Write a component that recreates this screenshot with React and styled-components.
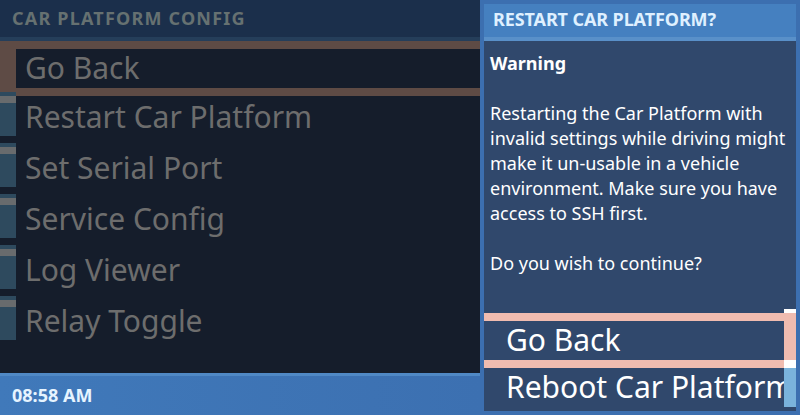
import React from "react";
import styled, { createGlobalStyle } from "styled-components";

const GlobalStyle = createGlobalStyle`
  html, body {
    margin: 0;
    padding: 0;
    background: #151d2b;
    font-family: "Noto Sans", "Open Sans", sans-serif;
  }
  * { box-sizing: border-box; }
`;

const menuItems = [
  "Go Back",
  "Restart Car Platform",
  "Set Serial Port",
  "Service Config",
  "Log Viewer",
  "Relay Toggle",
];

const message = [
  "Restarting the Car Platform with",
  "invalid settings while driving might",
  "make it un-usable in a vehicle",
  "environment. Make sure you have",
  "access to SSH first.",
];

function App() {
  return (
    <>
      <GlobalStyle />
      <Screen>
        <Panel>
          <PanelHeader>CAR PLATFORM CONFIG</PanelHeader>
          <Menu>
            {menuItems.map((label, i) => (
              <MenuRow key={label} $selected={i === 0}>
                {i !== 0 && <Marker />}
                <MenuLabel $selected={i === 0}>{label}</MenuLabel>
              </MenuRow>
            ))}
          </Menu>
          <StatusBar>08:58 AM</StatusBar>
        </Panel>

        <Dialog>
          <DialogTitle>RESTART CAR PLATFORM?</DialogTitle>
          <DialogBody>
            <Message>
              <strong>Warning</strong>
              <br />
              <br />
              {message.map((line) => (
                <Line key={line}>{line}</Line>
              ))}
              <br />
              Do you wish to continue?
            </Message>

            <Choices>
              <ChoiceList>
                <Choice $selected>Go Back</Choice>
                <Choice>Reboot Car Platform</Choice>
              </ChoiceList>
              <Scrollbar>
                <ScrollFocus />
                <ScrollThumb />
              </Scrollbar>
            </Choices>
          </DialogBody>
        </Dialog>
      </Screen>
    </>
  );
}

const Screen = styled.div`
  display: grid;
  grid-template-columns: 480px 320px;
  width: 800px;
  height: 415px;
  overflow: hidden;
`;

const Panel = styled.section`
  display: flex;
  flex-direction: column;
  background: #151d2b;
`;

const PanelHeader = styled.div`
  height: 41px;
  padding: 6px 0 0 12px;
  background: #1b2f4b;
  border-bottom: 4px solid #253e5a;
  color: #667171;
  font-size: 18px;
  font-weight: 700;
  letter-spacing: 1.2px;
  white-space: nowrap;
`;

const Menu = styled.div`
  flex: 1;
  display: flex;
  flex-direction: column;
`;

const MenuRow = styled.div`
  display: flex;
  align-items: flex-start;
  height: ${({ $selected }) => ($selected ? "55px" : "51px")};
  margin-bottom: ${({ $selected }) => ($selected ? "-4px" : "0")};
  ${({ $selected }) =>
    $selected &&
    `
    background: #5e4b45;
    padding: 8px 0 8px 16px;
  `}
`;

const Marker = styled.div`
  width: 16px;
  height: 44px;
  flex: none;
  background: #2e4a5e;
  border-top: 4px solid #2e4a5e;
  box-shadow: inset 0 7px 0 #686b6d;
`;

const MenuLabel = styled.div`
  flex: 1;
  height: 39px;
  padding-left: 9px;
  background: #151d2b;
  color: #6d6d6d;
  font-size: 30px;
  line-height: 38px;
  white-space: nowrap;
  ${({ $selected }) => !$selected && "background: transparent; margin-top: 6px;"}
`;

const StatusBar = styled.div`
  height: 42px;
  padding: 7px 0 0 12px;
  background: linear-gradient(90deg, #4079ba, #3c70b1);
  border-top: 3px solid #5089c5;
  color: #e6f4ff;
  font-size: 18px;
  font-weight: 700;
`;

const Dialog = styled.aside`
  display: flex;
  flex-direction: column;
  border: 4px solid #3c6fb0;
  background: #30486c;
`;

const DialogTitle = styled.div`
  height: 37px;
  padding: 3px 0 0 9px;
  background: #4580c0;
  border-bottom: 4px solid #5990c9;
  color: #dff0ff;
  font-size: 18px;
  font-weight: 700;
  letter-spacing: -0.1px;
  white-space: nowrap;
`;

const DialogBody = styled.div`
  flex: 1;
  display: flex;
  flex-direction: column;
  justify-content: space-between;
`;

const Message = styled.div`
  padding: 10px 0 0 6px;
  color: #ffffff;
  font-size: 18px;
  line-height: 25px;
  white-space: nowrap;

  strong {
    font-weight: 700;
  }
`;

const Line = styled.div``;

const Choices = styled.div`
  display: flex;
  height: 98px;
  margin-bottom: 4px;
`;

const ChoiceList = styled.div`
  flex: 1;
  min-width: 0;
  padding-top: 4px;
  overflow: hidden;
`;

const Choice = styled.div`
  height: ${({ $selected }) => ($selected ? "55px" : "39px")};
  padding-left: 22px;
  border-top: ${({ $selected }) => ($selected ? "8px solid #f0bcb0" : "none")};
  border-bottom: ${({ $selected }) => ($selected ? "8px solid #f0bcb0" : "none")};
  color: #ffffff;
  font-size: 30px;
  line-height: 38px;
  white-space: nowrap;
`;

const Scrollbar = styled.div`
  width: 12px;
  flex: none;
  display: flex;
  flex-direction: column;
  background: #ffffff;
`;

const ScrollFocus = styled.div`
  height: 47px;
  margin-top: 4px;
  background: #f0bcb0;
`;

const ScrollThumb = styled.div`
  flex: 1;
  margin-top: 8px;
  background: #7ab3dc;
`;

export default App;
